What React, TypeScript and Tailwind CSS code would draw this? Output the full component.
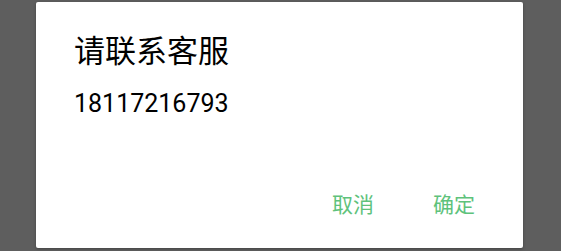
import React from "react";

const font = { fontFamily: "Roboto, 'Noto Sans CJK SC', sans-serif" };

const App = () => {
  return (
    <div
      className="w-[561px] h-[251px] bg-[#5e5e5e] pt-[2px] pl-[36px] overflow-hidden"
      style={font}
    >
      <div className="w-[487px] h-[246px] bg-white rounded-[2px] shadow-[0_1px_3px_rgba(0,0,0,0.3)] flex flex-col">
        <div className="pt-[30px] px-[38px] text-[31px] leading-[40px] text-black">
          请联系客服
        </div>
        <div className="pt-[16px] px-[38px] text-[25px] leading-[32px] text-black">
          18117216793
        </div>
        <div className="mt-auto mb-[29px] flex justify-end gap-[59px] pr-[48px] text-[21px] leading-[28px] text-[#5ec27b]">
          <span>取消</span>
          <span>确定</span>
        </div>
      </div>
    </div>
  );
};

export default App;
